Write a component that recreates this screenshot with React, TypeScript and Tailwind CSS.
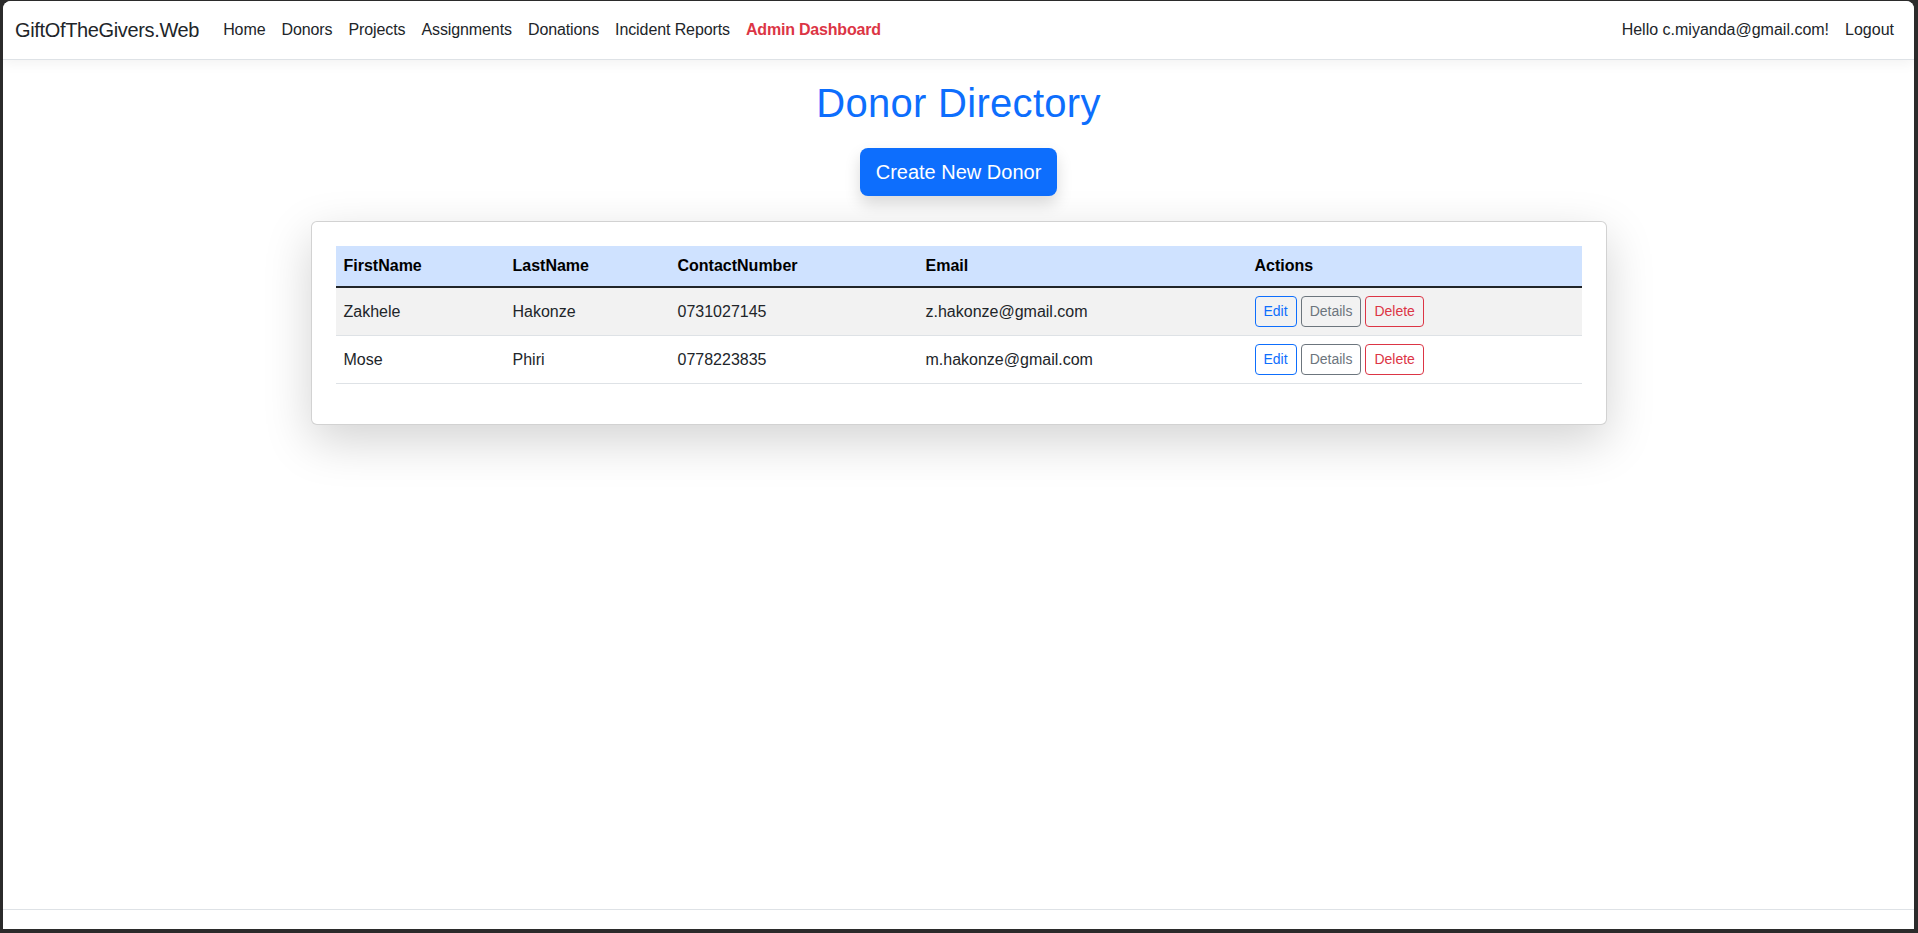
import React from 'react';

const donors = [
  { first: 'Zakhele', last: 'Hakonze', phone: '0731027145', email: 'z.hakonze@gmail.com' },
  { first: 'Mose', last: 'Phiri', phone: '0778223835', email: 'm.hakonze@gmail.com' },
];

const navLinks = ['Home', 'Donors', 'Projects', 'Assignments', 'Donations', 'Incident Reports'];

const font = { fontFamily: '"Liberation Sans", Arial, sans-serif' };

function Navbar() {
  return (
    <nav className="h-[59px] flex items-center justify-between px-3 bg-white border-b border-[#dee2e6] shadow-[0_4px_12px_rgba(0,0,0,0.05)] relative z-10">
      <div className="flex items-center">
        <a className="text-[20px] leading-[30px] tracking-[-0.35px] text-[#212529] mr-4">GiftOfTheGivers.Web</a>
        <ul className="flex items-center">
          {navLinks.map((l) => (
            <li key={l}>
              <a className="block px-2 py-2 text-[16px] leading-6 tracking-[-0.1px] text-[#212529]">{l}</a>
            </li>
          ))}
          <li>
            <a className="block px-2 py-2 text-[16px] leading-6 tracking-[-0.2px] font-bold text-[#dc3545]">Admin Dashboard</a>
          </li>
        </ul>
      </div>
      <ul className="flex items-center">
        <li>
          <a className="block px-2 py-2 text-[16px] leading-6 text-[#212529]">Hello c.miyanda@gmail.com!</a>
        </li>
        <li>
          <a className="block px-2 py-2 text-[16px] leading-6 text-[#212529]">Logout</a>
        </li>
      </ul>
    </nav>
  );
}

function ActionButtons() {
  return (
    <div className="flex gap-1">
      <button className="h-[31px] px-2 text-[14px] leading-[21px] rounded-[4px] border border-[#0d6efd] text-[#0d6efd]">Edit</button>
      <button className="h-[31px] px-2 text-[14px] leading-[21px] rounded-[4px] border border-[#6c757d] text-[#6c757d]">Details</button>
      <button className="h-[31px] px-2 text-[14px] leading-[21px] rounded-[4px] border border-[#dc3545] text-[#dc3545]">Delete</button>
    </div>
  );
}

export default function App() {
  return (
    <div className="h-screen bg-[#2b2b2b] pt-px pl-[3px] pr-[4px] pb-[4px]" style={font}>
      <div className="h-full bg-white rounded-t-[8px] overflow-hidden flex flex-col">
        <Navbar />

        <main className="flex-1 pt-[19px]">
          <div className="w-[1296px] mx-auto flex flex-col items-center">
            <h1 className="text-[40px] leading-[48px] font-medium tracking-[0.3px] text-[#0d6efd]">Donor Directory</h1>

            <button className="mt-[21px] h-[48px] px-4 rounded-[8px] bg-[#0d6efd] text-white text-[20px] leading-[30px] shadow-[0_8px_16px_rgba(0,0,0,0.15)]">
              Create New Donor
            </button>

            <div className="mt-[25px] w-full bg-white border border-black/[0.175] rounded-[6px] p-6 shadow-[0_16px_48px_rgba(0,0,0,0.175)]">
              <table className="w-full table-fixed border-collapse mb-4 text-[16px] leading-6 text-[#212529]">
                <colgroup>
                  <col className="w-[169px]" />
                  <col className="w-[165px]" />
                  <col className="w-[248px]" />
                  <col className="w-[329px]" />
                  <col />
                </colgroup>
                <thead>
                  <tr className="bg-[#cfe2ff] text-black">
                    <th className="text-left font-bold px-2 py-2 border-b-2 border-[#212529]">FirstName</th>
                    <th className="text-left font-bold px-2 py-2 border-b-2 border-[#212529]">LastName</th>
                    <th className="text-left font-bold px-2 py-2 border-b-2 border-[#212529]">ContactNumber</th>
                    <th className="text-left font-bold px-2 py-2 border-b-2 border-[#212529]">Email</th>
                    <th className="text-left font-bold px-2 py-2 border-b-2 border-[#212529]">Actions</th>
                  </tr>
                </thead>
                <tbody>
                  {donors.map((d, i) => (
                    <tr key={d.phone} className={i % 2 === 0 ? 'bg-[#f2f2f2]' : 'bg-white'}>
                      <td className="px-2 py-2 align-middle border-b border-[#dee2e6]">{d.first}</td>
                      <td className="px-2 py-2 align-middle border-b border-[#dee2e6]">{d.last}</td>
                      <td className="px-2 py-2 align-middle border-b border-[#dee2e6]">{d.phone}</td>
                      <td className="px-2 py-2 align-middle border-b border-[#dee2e6]">{d.email}</td>
                      <td className="px-2 py-2 align-middle border-b border-[#dee2e6]">
                        <ActionButtons />
                      </td>
                    </tr>
                  ))}
                </tbody>
              </table>
            </div>
          </div>
        </main>

        <footer className="h-[20px] border-t border-[#dee2e6]" />
      </div>
    </div>
  );
}
